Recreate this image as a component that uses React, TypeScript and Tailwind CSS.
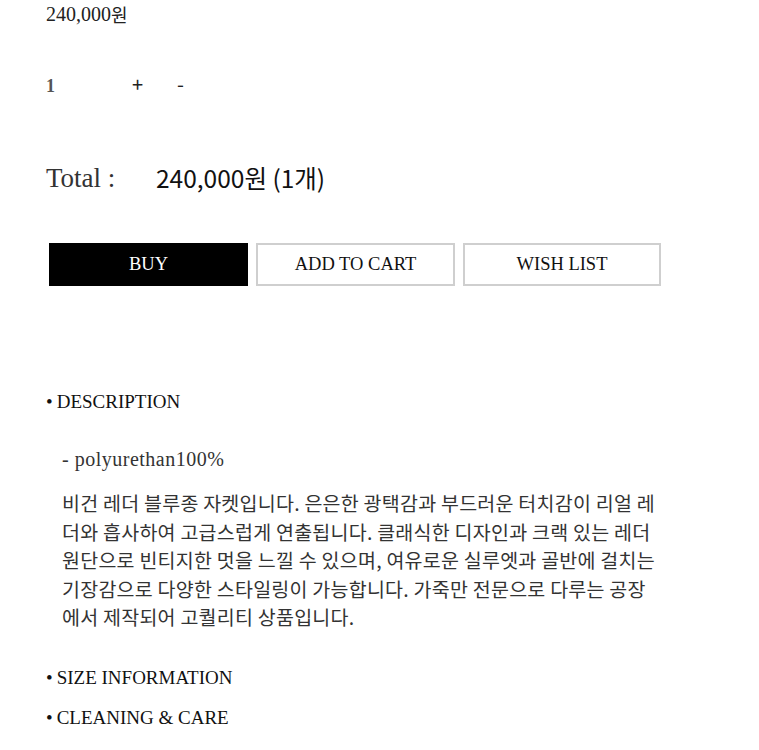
import React from "react";

const serif = { fontFamily: '"Liberation Serif", "Noto Sans CJK KR", serif' };
const sansKR = { fontFamily: '"Noto Sans CJK KR", "Noto Sans", sans-serif' };

export default function App() {
  return (
    <div className="w-[759px] h-[750px] bg-white overflow-hidden text-[#222]" style={serif}>
      <div className="pl-[46px]">
        <div className="h-[28px] flex items-center text-[20px] leading-none">
          <span>240,000</span>
          <span style={sansKR} className="text-[18px]">원</span>
        </div>
        <div className="mt-[44px] h-[28px] flex items-center text-[#555]">
          <span className="w-[86px] text-[18px] font-bold">1</span>
          <span className="w-[45px] text-[20px] text-[#222] -mt-[4px]" style={sansKR}>+</span>
          <span className="text-[20px] text-[#222] -mt-[4px]" style={sansKR}>-</span>
        </div>
        <div className="mt-[63px] h-[30px] flex items-center">
          <span className="w-[110px] text-[27px] text-[#333]">Total :</span>
          <span className="text-[24.5px] text-[#111]" style={sansKR}>240,000원 (1개)</span>
        </div>
        <div className="mt-[50px] ml-[3px] flex gap-[8px] h-[43px]">
          <button className="w-[199px] h-full bg-black text-white text-[18.5px]" style={serif}>BUY</button>
          <button className="w-[199px] h-full border-2 border-[#cfcfcf] text-[18.5px] text-[#111]" style={serif}>ADD TO CART</button>
          <button className="w-[198px] h-full border-2 border-[#cfcfcf] text-[18.5px] text-[#111]" style={serif}>WISH LIST</button>
        </div>
        <div className="mt-[101px] h-[30px] flex items-center text-[19px] text-[#111]">
          <span className="mr-[4px]">•</span>DESCRIPTION
        </div>
        <div className="pl-[16px]">
          <div className="mt-[27px] h-[30px] flex items-center text-[20px] tracking-[0.5px] text-[#333]">- polyurethan100%</div>
          <div className="mt-[15px] text-[19.5px] tracking-[0.25px] leading-[28.5px] text-[#333]" style={sansKR}>
            <div>비건 레더 블루종 자켓입니다. 은은한 광택감과 부드러운 터치감이 리얼 레</div>
            <div>더와 흡사하여 고급스럽게 연출됩니다. 클래식한 디자인과 크랙 있는 레더</div>
            <div>원단으로 빈티지한 멋을 느낄 수 있으며, 여유로운 실루엣과 골반에 걸치는</div>
            <div>기장감으로 다양한 스타일링이 가능합니다. 가죽만 전문으로 다루는 공장</div>
            <div>에서 제작되어 고퀄리티 상품입니다.</div>
          </div>
        </div>
        <div className="mt-[32px] h-[30px] flex items-center text-[19px] text-[#111]">
          <span className="mr-[4px]">•</span>SIZE INFORMATION
        </div>
        <div className="mt-[10px] h-[30px] flex items-center text-[19px] text-[#111]">
          <span className="mr-[4px]">•</span>CLEANING &amp; CARE
        </div>
      </div>
    </div>
  );
}
